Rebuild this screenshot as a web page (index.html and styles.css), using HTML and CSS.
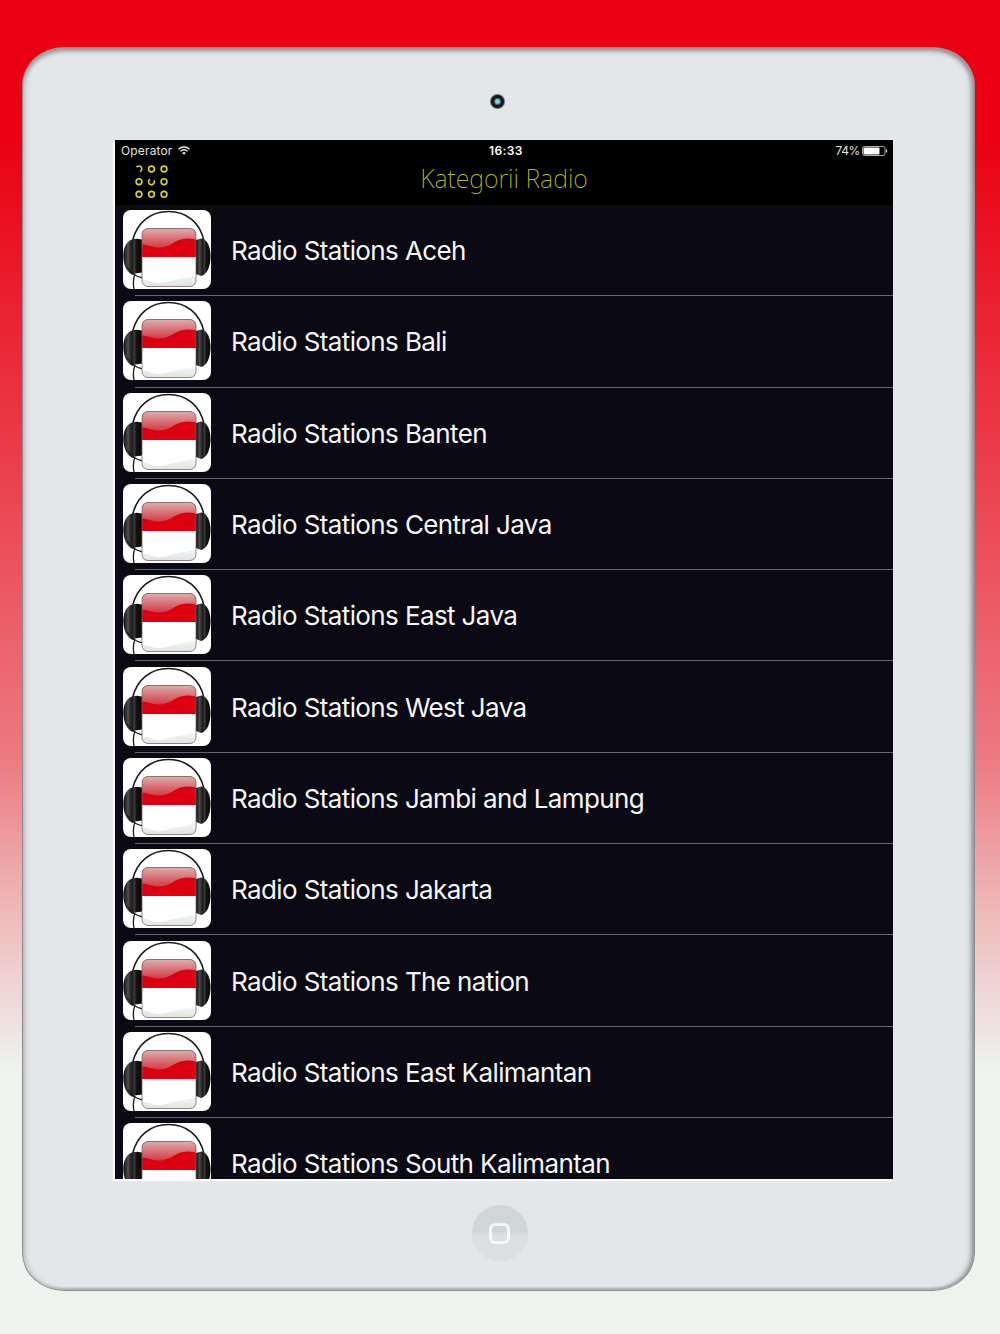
FILE: index.html
```html
<!DOCTYPE html>
<html>
  <head>
    <meta charset="utf-8">
    <title>Kategorii Radio</title>
    <link rel="stylesheet" href="styles.css">
  </head>
  <body>
    <svg class="defs" width="0" height="0">
      <defs>
        <linearGradient id="gloss" x1="0" y1="0" x2="0" y2="1">
          <stop offset="0" stop-color="#dfb0b0"/>
          <stop offset="1" stop-color="#d33a44"/>
        </linearGradient>
        <linearGradient id="cup" x1="0" y1="0" x2="1" y2="0">
          <stop offset="0" stop-color="#0c0c0c"/>
          <stop offset=".25" stop-color="#4c4c4a"/>
          <stop offset=".45" stop-color="#1c1c1c"/>
          <stop offset=".6" stop-color="#3a3836"/>
          <stop offset=".7" stop-color="#161412"/>
          <stop offset="1" stop-color="#080808"/>
        </linearGradient>
        <linearGradient id="low" x1="0" y1="0" x2="0" y2="1">
          <stop offset="0" stop-color="#f3f6f4"/>
          <stop offset="1" stop-color="#dde2de"/>
        </linearGradient>
        <clipPath id="square"><rect x="19" y="18.500" width="54" height="58" rx="6"/></clipPath>
      </defs>
      <symbol id="station" viewBox="0 0 88 79">
        <rect width="88" height="79" rx="8" fill="#fff"/>
        <path d="M9.500 31C14 12 28 1.500 45.500 1.500S77 12 81 31" fill="none" stroke="#1b1b1b" stroke-width="1.600"/>
        <path d="M11 29C4 30 .3 37 .3 46S4 63 10 65l2-1.500 7-1V29.500l-5-.8z" fill="url(#cup)"/>
        <path d="M73 30l5-1.500c6.500.5 9.500 8.500 9.500 18S84 65 78 66l-5-2z" fill="url(#cup)"/>
        <path d="M4 57c4 6 9 10 16 11M12 64c-2 5-2 10-1 15" fill="none" stroke="#1a1a1a" stroke-width="1.300"/>
        <g clip-path="url(#square)">
          <rect x="19" y="18" width="54" height="29" fill="#dc0010"/>
          <path d="M19 18h54v11.500c-9-2-16-.5-22 3-7 4.500-13 6-20 4.500-5-1-8-2.500-12-2.500z" fill="url(#gloss)"/>
          <rect x="19" y="47" width="54" height="30" fill="#fff"/>
          <path d="M19 70c6-1 9 3 16 3 9 0 12-3 20-4 7-1 12-3 18-3v12H19z" fill="url(#low)"/>
        </g>
        <rect x="19" y="18.500" width="54" height="58" rx="6" fill="none" stroke="#7a6464" stroke-width=".8"/>
      </symbol>
    </svg>

    <div class="tablet">
      <div class="bezel-top"><span class="camera"></span></div>
      <div class="screen">
        <div class="status">
          <span class="operator">Operator
            <svg class="wifi" width="12" height="9" viewBox="0 0 12 9" fill="none" stroke="#e8e8e8" stroke-width="1.500">
              <path d="M.5 3.200a7.800 7.800 0 0 1 11 0M2.500 5.300a5 5 0 0 1 7 0"/>
              <path d="M6 8.800 4.100 6.900a2.700 2.700 0 0 1 3.800 0z" fill="#e8e8e8" stroke="none"/>
            </svg>
          </span>
          <span class="clock">16:33</span>
          <span class="power"><span class="percent">74%</span>
            <svg width="26" height="10" viewBox="0 0 26 10">
              <rect x=".5" y=".5" width="22.500" height="9" rx="2" fill="none" stroke="#aaa"/>
              <rect x="1.500" y="1.500" width="16" height="7" rx="1" fill="#fff"/>
              <path d="M24 3q2.500 2 0 4z" fill="#ddd"/>
            </svg>
          </span>
        </div>
        <div class="navbar">
          <svg class="menu" width="34" height="34" viewBox="0 0 34 34" fill="none" stroke="#d6d61e" stroke-width="1.600">
            <path d="M1.500 2.300A2.900 2.900 0 1 1 5 6.600"/>
            <circle cx="16.500" cy="4" r="2.900"/>
            <circle cx="29" cy="4" r="2.900"/>
            <circle cx="4" cy="16.700" r="2.900"/>
            <path d="M18.900 15.300A2.900 2.900 0 1 1 15 14.300"/>
            <circle cx="29" cy="16.700" r="2.900"/>
            <circle cx="4" cy="29.300" r="2.900"/>
            <circle cx="16.500" cy="29.300" r="2.900"/>
            <circle cx="29" cy="29.300" r="2.900"/>
          </svg>
          <h1 class="title">Kategorii Radio</h1>
        </div>
        <ul class="list">
          <li class="row"><svg class="thumb"><use href="#station"/></svg><span class="name">Radio Stations Aceh</span></li>
          <li class="row"><svg class="thumb"><use href="#station"/></svg><span class="name">Radio Stations Bali</span></li>
          <li class="row"><svg class="thumb"><use href="#station"/></svg><span class="name">Radio Stations Banten</span></li>
          <li class="row"><svg class="thumb"><use href="#station"/></svg><span class="name">Radio Stations Central Java</span></li>
          <li class="row"><svg class="thumb"><use href="#station"/></svg><span class="name">Radio Stations East Java</span></li>
          <li class="row"><svg class="thumb"><use href="#station"/></svg><span class="name">Radio Stations West Java</span></li>
          <li class="row"><svg class="thumb"><use href="#station"/></svg><span class="name">Radio Stations Jambi and Lampung</span></li>
          <li class="row"><svg class="thumb"><use href="#station"/></svg><span class="name">Radio Stations Jakarta</span></li>
          <li class="row"><svg class="thumb"><use href="#station"/></svg><span class="name">Radio Stations The nation</span></li>
          <li class="row"><svg class="thumb"><use href="#station"/></svg><span class="name">Radio Stations East Kalimantan</span></li>
          <li class="row"><svg class="thumb"><use href="#station"/></svg><span class="name">Radio Stations South Kalimantan</span></li>
        </ul>
      </div>
      <div class="bezel-bottom"><span class="home"><span class="home-square"></span></span></div>
    </div>
  </body>
</html>
```
FILE: styles.css
```css
* {
  box-sizing: border-box;
}
body {
  margin: 0;
  height: 1334px;
  padding: 47px 25px 0 22px;
  overflow: hidden;
  background: linear-gradient(#e90012 0, #e90012 130px, #ea3845 430px, #ec7a82 760px, #eeb5b5 900px, #eef3f0 1070px);
  font-family: Inter, "Liberation Sans", sans-serif;
}
.defs {
  display: block;
  height: 0;
}
.tablet {
  height: 1244px;
  border-radius: 42px / 38px;
  padding: 0 81px 0 93px;
  background: #e3e7ea;
  border: 1px solid #8d8d90;
  box-shadow: inset 0 4px 5px -1px #8e9093, inset -4px 0 5px -1px #98989b, inset 5px 0 4px -1px #d5d3d7, inset 0 -2px 2px #b5b5b8, inset 0 0 3px 5px #e6e6e9;
}
.bezel-top {
  height: 92px;
  display: flex;
  justify-content: center;
  padding: 45px 14px 0 0;
}
.camera {
  width: 17px;
  height: 17px;
  border-radius: 50%;
  background: radial-gradient(circle, #8fe0e8 0, #6fc3cc 2px, #15171c 4px, #15171c 6px, #e0e3e6 8px);
}
.screen {
  height: 1039px;
  overflow: hidden;
  margin-left: -1px;
  background: #0b0914;
  color: #fff;
  box-shadow: -2px 2px 1px #fafafc;
}
.status {
  display: grid;
  grid-template-columns: 1fr auto 1fr;
  align-items: center;
  height: 21px;
  padding: 0 5px 0 6px;
  background: #000;
  font-size: 12px;
  color: #e0e0e0;
}
.operator {
  letter-spacing: .15px;
}
.wifi {
  margin-left: 2px;
}
.clock {
  padding-left: 3px;
  font-weight: 600;
  letter-spacing: .4px;
  color: #fff;
}
.power {
  display: flex;
  justify-content: flex-end;
  align-items: center;
  gap: 2px;
}
.percent {
  letter-spacing: -.4px;
}
.navbar {
  display: grid;
  grid-template-columns: 40px 1fr 40px;
  height: 44px;
  padding: 0 20px;
  background: #000;
}
.menu {
  margin-top: 4px;
}
.title {
  margin: 0;
  text-align: center;
  font: 200 25px/34px "Noto Sans", "Open Sans", sans-serif;
  color: #b8b820;
}
.list {
  margin: 0;
  padding: 0;
  list-style: none;
}
.row {
  display: flex;
  align-items: center;
  gap: 20px;
  height: 91.3px;
  padding-left: 8px;
  background: linear-gradient(#66656e, #66656e) 20px 100% / 100% 1px no-repeat;
}
.thumb {
  width: 88px;
  height: 79px;
  margin-bottom: 2px;
}
.name {
  font-size: 26px;
  letter-spacing: -.61px;
  color: #f6f6f8;
}
.bezel-bottom {
  display: flex;
  justify-content: center;
  padding: 26px 10px 0 0;
}
.home {
  display: flex;
  align-items: center;
  justify-content: center;
  width: 56px;
  height: 56px;
  border-radius: 50%;
  background: linear-gradient(#d0d5d8 48%, #dbdfe1 54%);
}
.home-square {
  width: 21px;
  height: 21px;
  border: 3px solid #f4f6f7;
  border-radius: 6px;
}
```
